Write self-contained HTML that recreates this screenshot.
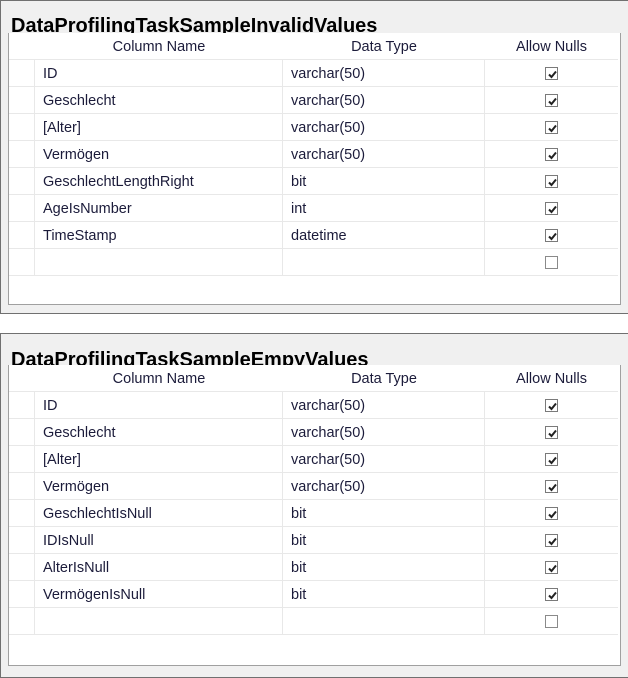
<!DOCTYPE html>
<html><head><meta charset="utf-8"><style>
*{margin:0;padding:0;box-sizing:border-box}
body{width:628px;height:673px;background:#fff;font-family:"Liberation Sans",sans-serif;position:relative;overflow:hidden}
.panel{position:absolute;left:0;width:630px;background:#f0f0f0;border:1px solid #707070}
.title{position:absolute;left:11px;font-weight:bold;font-size:20px;line-height:20px;color:#000;white-space:nowrap;letter-spacing:0px}
.inner{position:absolute;left:8px;width:613px;background:#fff;border:1px solid #a0a0a0;border-top:none}
.grid{position:absolute;left:0;top:0;width:609px}
.row{height:27px;border-bottom:1px solid #e8e8e8;position:relative;font-size:14.5px;color:#1b1b3a}
.row div{position:absolute;top:0;height:26px;line-height:28px}
.hdr div{line-height:28px}
.c0{left:0;width:26px;border-right:1px solid #e8e8e8}
.c1{left:26px;width:248px;border-right:1px solid #e8e8e8;padding-left:8px}
.c2{left:274px;width:202px;border-right:1px solid #e8e8e8;padding-left:8px}
.c3{left:476px;width:133px}
.hdr div{border-right:none!important;text-align:center;padding-left:0!important}
.cb{position:absolute;left:60px;top:7px;width:13px;height:13px;border:1px solid #7a7a7a;background:#fff}
.cb svg{position:absolute;left:1px;top:1px}
</style></head><body>

<div class="panel" style="top:0;height:314px"></div>
<div class="title" style="top:16px">DataProfilingTaskSampleInvalidValues</div>
<div class="inner" style="top:33px;height:272px">
<div class="grid">
<div class="row hdr"><div class="c0"></div><div class="c1">Column Name</div><div class="c2">Data Type</div><div class="c3">Allow Nulls</div></div>
<div class="row"><div class="c0"></div><div class="c1">ID</div><div class="c2">varchar(50)</div><div class="c3"><span class="cb"><svg width="11" height="11"><path d="M2 5.5L4.5 8L9 2.5" stroke="#222" stroke-width="2" fill="none"/></svg></span></div></div>
<div class="row"><div class="c0"></div><div class="c1">Geschlecht</div><div class="c2">varchar(50)</div><div class="c3"><span class="cb"><svg width="11" height="11"><path d="M2 5.5L4.5 8L9 2.5" stroke="#222" stroke-width="2" fill="none"/></svg></span></div></div>
<div class="row"><div class="c0"></div><div class="c1">[Alter]</div><div class="c2">varchar(50)</div><div class="c3"><span class="cb"><svg width="11" height="11"><path d="M2 5.5L4.5 8L9 2.5" stroke="#222" stroke-width="2" fill="none"/></svg></span></div></div>
<div class="row"><div class="c0"></div><div class="c1">Vermögen</div><div class="c2">varchar(50)</div><div class="c3"><span class="cb"><svg width="11" height="11"><path d="M2 5.5L4.5 8L9 2.5" stroke="#222" stroke-width="2" fill="none"/></svg></span></div></div>
<div class="row"><div class="c0"></div><div class="c1">GeschlechtLengthRight</div><div class="c2">bit</div><div class="c3"><span class="cb"><svg width="11" height="11"><path d="M2 5.5L4.5 8L9 2.5" stroke="#222" stroke-width="2" fill="none"/></svg></span></div></div>
<div class="row"><div class="c0"></div><div class="c1">AgeIsNumber</div><div class="c2">int</div><div class="c3"><span class="cb"><svg width="11" height="11"><path d="M2 5.5L4.5 8L9 2.5" stroke="#222" stroke-width="2" fill="none"/></svg></span></div></div>
<div class="row"><div class="c0"></div><div class="c1">TimeStamp</div><div class="c2">datetime</div><div class="c3"><span class="cb"><svg width="11" height="11"><path d="M2 5.5L4.5 8L9 2.5" stroke="#222" stroke-width="2" fill="none"/></svg></span></div></div>
<div class="row"><div class="c0"></div><div class="c1"></div><div class="c2"></div><div class="c3"><span class="cb" style="border-color:#8a8a8a"></span></div></div>
</div></div>

<div class="panel" style="top:333px;height:345px"></div>
<div class="title" style="top:350px">DataProfilingTaskSampleEmpyValues</div>
<div class="inner" style="top:365px;height:301px">
<div class="grid">
<div class="row hdr"><div class="c0"></div><div class="c1">Column Name</div><div class="c2">Data Type</div><div class="c3">Allow Nulls</div></div>
<div class="row"><div class="c0"></div><div class="c1">ID</div><div class="c2">varchar(50)</div><div class="c3"><span class="cb"><svg width="11" height="11"><path d="M2 5.5L4.5 8L9 2.5" stroke="#222" stroke-width="2" fill="none"/></svg></span></div></div>
<div class="row"><div class="c0"></div><div class="c1">Geschlecht</div><div class="c2">varchar(50)</div><div class="c3"><span class="cb"><svg width="11" height="11"><path d="M2 5.5L4.5 8L9 2.5" stroke="#222" stroke-width="2" fill="none"/></svg></span></div></div>
<div class="row"><div class="c0"></div><div class="c1">[Alter]</div><div class="c2">varchar(50)</div><div class="c3"><span class="cb"><svg width="11" height="11"><path d="M2 5.5L4.5 8L9 2.5" stroke="#222" stroke-width="2" fill="none"/></svg></span></div></div>
<div class="row"><div class="c0"></div><div class="c1">Vermögen</div><div class="c2">varchar(50)</div><div class="c3"><span class="cb"><svg width="11" height="11"><path d="M2 5.5L4.5 8L9 2.5" stroke="#222" stroke-width="2" fill="none"/></svg></span></div></div>
<div class="row"><div class="c0"></div><div class="c1">GeschlechtIsNull</div><div class="c2">bit</div><div class="c3"><span class="cb"><svg width="11" height="11"><path d="M2 5.5L4.5 8L9 2.5" stroke="#222" stroke-width="2" fill="none"/></svg></span></div></div>
<div class="row"><div class="c0"></div><div class="c1">IDIsNull</div><div class="c2">bit</div><div class="c3"><span class="cb"><svg width="11" height="11"><path d="M2 5.5L4.5 8L9 2.5" stroke="#222" stroke-width="2" fill="none"/></svg></span></div></div>
<div class="row"><div class="c0"></div><div class="c1">AlterIsNull</div><div class="c2">bit</div><div class="c3"><span class="cb"><svg width="11" height="11"><path d="M2 5.5L4.5 8L9 2.5" stroke="#222" stroke-width="2" fill="none"/></svg></span></div></div>
<div class="row"><div class="c0"></div><div class="c1">VermögenIsNull</div><div class="c2">bit</div><div class="c3"><span class="cb"><svg width="11" height="11"><path d="M2 5.5L4.5 8L9 2.5" stroke="#222" stroke-width="2" fill="none"/></svg></span></div></div>
<div class="row"><div class="c0"></div><div class="c1"></div><div class="c2"></div><div class="c3"><span class="cb" style="border-color:#8a8a8a"></span></div></div>
</div></div>

</body></html>
